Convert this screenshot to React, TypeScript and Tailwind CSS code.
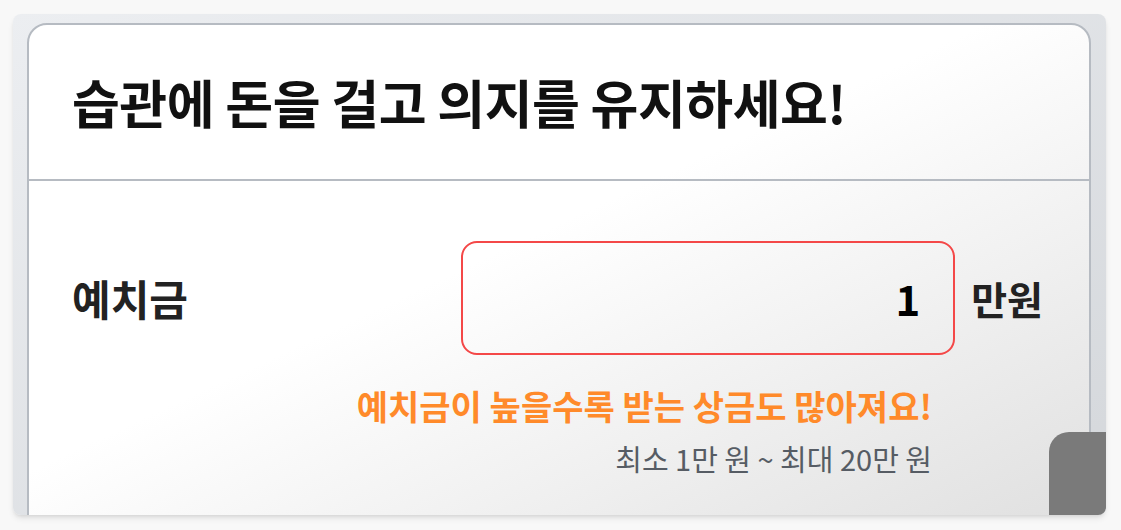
import React from 'react';

const font = { fontFamily: '"Noto Sans CJK KR", "Noto Sans", sans-serif' };

export default function App() {
  return (
    <div className="h-[530px] w-full bg-[#f8f8f8] pt-[14px] pl-[13px] pr-[15px] pb-[15px]" style={font}>
      <div className="relative h-full overflow-hidden rounded-lg bg-linear-to-br from-[#eceef1] to-[#d4d7db] pt-[9px] pl-[14px] pr-[15px] shadow-md">
        <div className="h-[500px] rounded-t-[20px] border-2 border-[#b6bbc2] bg-linear-to-br from-white from-45% to-[#e0e0e0]">
          <div className="flex h-[156px] items-center border-b-2 border-[#b6bbc2] pl-[43px]">
            <h1 className="text-[52px] font-bold leading-none tracking-[-0.5px] text-[#111]">
              습관에 돈을 걸고 의지를 유지하세요!
            </h1>
          </div>

          <div className="pt-[60px] pl-[43px] pr-[46px]">
            <div className="flex items-center">
              <span className="flex-1 text-[42px] font-bold leading-none text-[#222]">예치금</span>
              <div className="flex h-[114px] w-[494px] items-center justify-end rounded-2xl border-[2.5px] border-[#f44848] pr-[33px]">
                <span className="text-[42px] font-bold leading-none text-black">1</span>
              </div>
              <span className="ml-4 text-[39px] font-bold leading-none text-[#222]">만원</span>
            </div>

            <div className="flex flex-col items-end pr-[111px]">
              <p className="mt-[34px] text-[34px] font-bold leading-none text-[#ff8a2a]">
                예치금이 높을수록 받는 상금도 많아져요!
              </p>
              <p className="mt-[21px] text-[29px] leading-none text-[#565c64]">
                최소 1만 원 ~ 최대 20만 원
              </p>
            </div>
          </div>
        </div>

        <div className="absolute right-0 bottom-0 h-[83px] w-[57px] rounded-tl-[20px] bg-[#7a7a7a]" />
      </div>
    </div>
  );
}
